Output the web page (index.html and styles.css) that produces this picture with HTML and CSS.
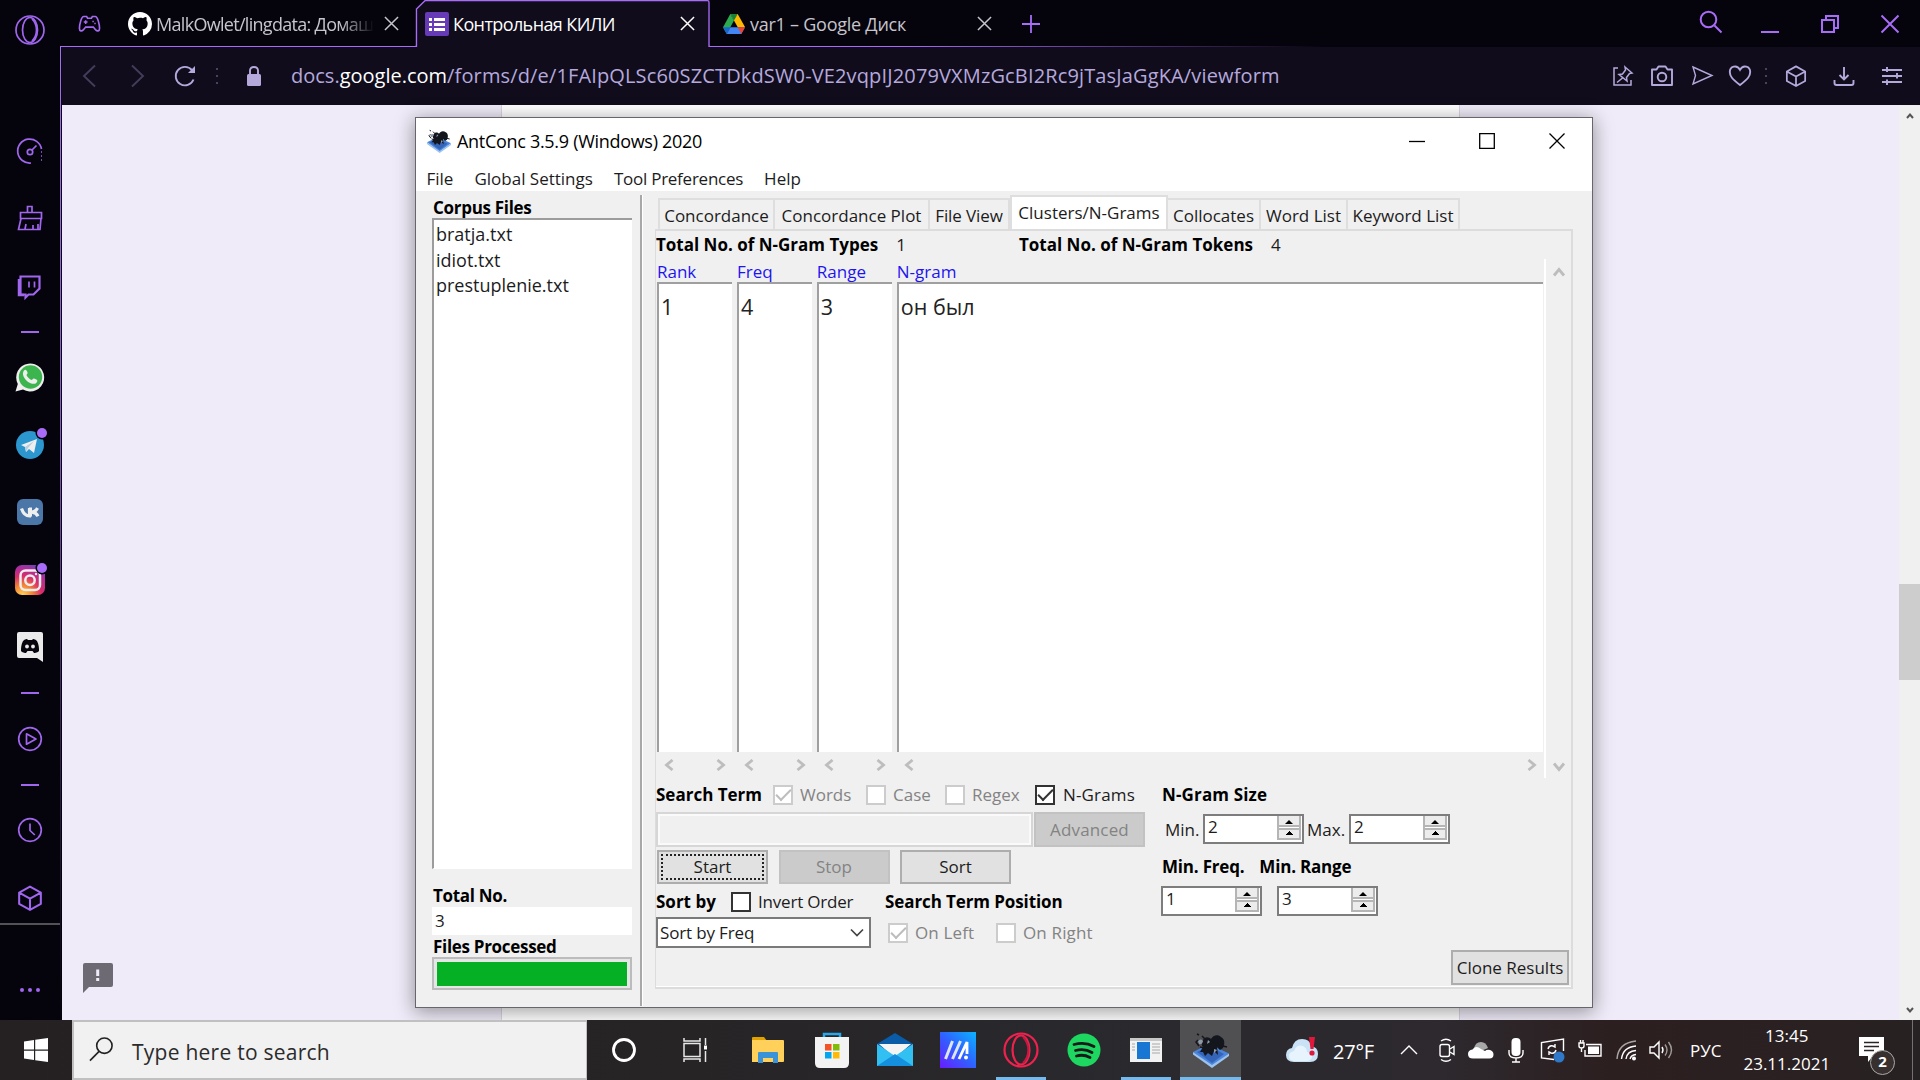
FILE: index.html
```html
<!DOCTYPE html>
<html lang="ru">
<head>
<meta charset="utf-8">
<title>Контрольная КИЛИ</title>
<link rel="stylesheet" href="styles.css">
</head>
<body>
<svg class="defs" width="0" height="0">
  <symbol id="ant" viewBox="0 0 36 36">
    <path d="M0 20 16 12l20 9.500L19 34z" fill="#4a86dd"/><path d="M0 20v2.500L19 36l17-12v-2.500L19 33z" fill="#9cc2ee"/><path d="M4 20 16 14l15 8-12 9z" fill="#3565b8"/>
    <path d="M10 8c2-4 6-3 8-1 2-4 7-5 10-2 4 2 4 7 2 11l-3 2-3-3 1 8-4-4-2 5-4-3-3 3-2-4-3 0 3-5c-2-2-1-5 0-7z" fill="#14161d"/>
    <path d="M5 9q3-3 5 0-1 4-4 3zM15 8l2 2-3 2zM21 17l3 1-3 3z" fill="#8f99a8"/>
    <path d="M5 8 3 10l3 4M4 2l2 1M9 4l3 3M30 14l4 1M7 15l4 1" stroke="#14161d" stroke-width="1.500" fill="none"/>
  </symbol>
  <symbol id="cube" viewBox="0 0 24 24"><path d="M12 1.5 22 7v10.500L12 23 2 17.500V7zM2 7l10 5.500L22 7M12 12.500V23" fill="none" stroke="currentColor" stroke-width="1.9" stroke-linejoin="round"/></symbol>
  <symbol id="left" viewBox="0 0 10 12"><path d="M8.500 1 2.500 6l6 5" fill="none" stroke="#bdbdbd" stroke-width="2.800"/></symbol>
  <symbol id="right" viewBox="0 0 10 12"><path d="m1.500 1 6 5-6 5" fill="none" stroke="#bdbdbd" stroke-width="2.800"/></symbol>
  <symbol id="x" viewBox="0 0 16 16"><path d="m1 1 14 14M15 1 1 15" fill="none" stroke="currentColor" stroke-width="1.600"/></symbol>
</svg>

<div class="browser">
  <nav class="sidebar">
    <svg class="side" viewBox="0 0 30 30"><ellipse cx="15" cy="15" rx="14" ry="14"/><ellipse cx="15" cy="15" rx="7.500" ry="12.500"/><path d="M17 4c6 6 6 16 0 22"/></svg>
    <svg class="side after-logo" viewBox="0 0 30 30"><path d="M16 27A12 12 0 1 1 26.500 13" /><circle cx="15" cy="16" r="2.700"/><path d="m17 14 4.500-4.500M26 16h1M26 20h1M26 24h1"/></svg>
    <svg class="side gap37" viewBox="0 0 30 30"><path d="M12.500 9V3.500h4.500V9M5.500 9.500h21v6h-21zM6 15.500 3.500 26.500H25l1-11M10 26l1-5M18 26v-4M23 26v-5"/></svg>
    <svg class="side gap38" viewBox="0 0 30 30"><path d="M5.500 5.500h19v12l-6 6h-5l-3 3v-3h-5z" stroke-width="2.200"/><path d="M4 8v16h5" stroke-width="2.500"/><path d="M14 10.500v6M19.500 10.500v6"/></svg>
    <div class="dash gap30"></div>
    <svg class="side gap29" viewBox="0 0 30 30"><path d="M.5 29.500 2.800 22A14 14 0 1 1 8 27.500z" fill="#eee" stroke="none"/><circle cx="15.500" cy="15" r="11.700" fill="#3db54e" stroke="none"/><path d="M9 8.500c1.500-1.500 2.500-1 3.500 2 .5 1-1 2-1 2.500 1 2.500 3 4 5 5 1 0 1.500-2 2.500-1.500 4 1.500 3.500 2 3 3.500-1.500 3-6 2-9.500-.5C9 16.500 6.500 12 9 8.500z" fill="#eee" stroke="none"/></svg>
    <div class="app gap38"><svg class="side" viewBox="0 0 30 30"><circle cx="15" cy="15" r="14" fill="#2c96cf" stroke="none"/><path d="m6 15 16-6-3 14-5-4-3 3-1-5z" fill="#eee" stroke="none"/><path d="m10 17 9-6-6 7-2 4z" fill="#b9cddd" stroke="none"/></svg><i class="badge"></i></div>
    <svg class="side gap37" viewBox="0 0 30 30"><rect x="2" y="2" width="26" height="26" rx="6" fill="#4a76a8" stroke="none"/><path d="M6.500 11.500c1.500 4.500 4 7.500 8 7.500v-8M22.500 11c-1 2-3 4-5.500 4.200 2.500.3 5 2 6 4" stroke="#eee" stroke-width="3.200"/><path d="M15.500 10.500v9" stroke="#eee" stroke-width="3"/></svg>
    <div class="app gap38"><svg class="side" viewBox="0 0 30 30"><defs><radialGradient id="ig" cx=".25" cy="1" r="1.150"><stop offset="0" stop-color="#ffd35c"/><stop offset=".28" stop-color="#f58634"/><stop offset=".55" stop-color="#d92d6b"/><stop offset=".8" stop-color="#a92e9c"/><stop offset="1" stop-color="#4756c9"/></radialGradient></defs><rect width="30" height="30" rx="7" fill="url(#ig)" stroke="none"/><rect x="5.500" y="5.500" width="19.500" height="19.500" rx="5" stroke="#eee" stroke-width="2.500"/><circle cx="15" cy="15.200" r="4.700" stroke="#eee" stroke-width="2.500"/><circle cx="21" cy="9" r="1.200" fill="#eee" stroke="none"/></svg><i class="badge"></i></div>
    <svg class="side gap37" viewBox="0 0 30 30"><path d="M4 0h22q2 0 2 2v28l-6-4H4q-2 0-2-2V2q0-2 2-2z" fill="#eaeaea" stroke="none"/><path d="M8 9c2-2 4-2 4-2l1 1h4l1-1s2 0 4 2c2 4 2 7 2 10-2 2-5 2-5 2l-1.500-2h-5L11 21s-3 0-5-2c0-3 0-6 2-10z" fill="#08050e" stroke="none"/><circle cx="12" cy="14.500" r="1.900" fill="#eaeaea" stroke="none"/><circle cx="18" cy="14.500" r="1.900" fill="#eaeaea" stroke="none"/></svg>
    <div class="dash gap30"></div>
    <svg class="side gap30" viewBox="0 0 30 30"><circle cx="15" cy="15" r="11.300"/><path d="M11.500 9.800v10.400l9.500-5.200z" stroke-linejoin="round"/></svg>
    <div class="dash gap30"></div>
    <svg class="side gap29" viewBox="0 0 30 30"><circle cx="15" cy="15" r="11.300"/><path d="M15 8.500v7l4.800 4.500"/></svg>
    <svg class="side-cube gap38"><use href="#cube"/></svg>
    <hr class="side-rule">
    <div class="more"><i></i><i></i><i></i></div>
  </nav>

  <main class="main">
    <header class="tabs">
      <svg class="pad" viewBox="0 0 24 18"><path d="M6 1.200h3l1 1.800h4l1-1.800h3c2.500 0 4.500 8 4.500 12.500 0 3-2.500 3-4 1.500l-2.500-3H8l-2.500 3c-1.500 1.500-4 1.500-4-1.500C1.500 9.200 3.500 1.200 6 1.200z" fill="none" stroke="#a46bf2" stroke-width="1.700"/><path d="M8 5v4M6 7h4M15 6.500h1.500M17 8.500h1.500" stroke="#a46bf2" stroke-width="1.600"/></svg>
      <div class="tab tab-first">
        <svg width="24" height="24" viewBox="0 0 16 16"><path fill="#fff" d="M8 0C3.580 0 0 3.580 0 8c0 3.540 2.290 6.530 5.470 7.590.4.070.55-.17.55-.38 0-.19-.01-.82-.01-1.490-2.010.37-2.530-.49-2.690-.94-.09-.23-.48-.94-.82-1.130-.28-.15-.68-.52-.01-.53.630-.01 1.080.58 1.230.82.720 1.210 1.870.87 2.330.66.070-.52.280-.87.510-1.070-1.780-.2-3.640-.89-3.640-3.950 0-.87.310-1.590.82-2.150-.08-.2-.36-1.020.08-2.120 0 0 .67-.21 2.200.82A7.600 7.600 0 0 1 8 3.870c.68 0 1.360.09 2 .27 1.530-1.040 2.200-.82 2.200-.82.440 1.100.16 1.920.08 2.120.51.560.82 1.270.82 2.150 0 3.070-1.870 3.750-3.650 3.950.290.250.540.730.540 1.480 0 1.070-.01 1.930-.01 2.200 0 .21.150.46.550.38A8.010 8.010 0 0 0 16 8c0-4.420-3.580-8-8-8z"/></svg>
        <span class="tab-title fade">MalkOwlet/lingdata: Домаш</span>
        <svg class="close"><use href="#x"/></svg>
      </div>
      <div class="tab tab-active">
        <svg class="outline" viewBox="0 0 296 47"><path d="M0 46.500H1.500V9L10 .7H292.500Q294 .7 294 2.500V46.500H296" fill="#100c1c" stroke="#a86cf8" stroke-width="1.300"/></svg>
        <svg width="24" height="24" viewBox="0 0 24 24"><rect width="24" height="24" rx="2" fill="#673ab7"/><path d="M4 6h3v3H4zM9 6h11v3H9zM4 11h3v3H4zM9 11h11v3H9zM4 16h3v3H4zM9 16h11v3H9z" fill="#fff"/></svg>
        <span class="tab-title">Контрольная КИЛИ</span>
        <svg class="close"><use href="#x"/></svg>
      </div>
      <div class="tab tab-last">
        <svg width="22" height="20" viewBox="0 0 22 20"><path d="M7.300 0h7.400L22 13h-7.400z" fill="#ffba00"/><path d="M7.300 0 11 6.500 3.700 20 0 13.300z" fill="#2da94f"/><path d="M7.300 0h7.400L11 6.500z" fill="#188038"/><path d="M3.700 20 7.400 13.300H22L18.300 20z" fill="#4285f4"/><path d="M14.700 13.300H22L18.300 20z" fill="#ea4335"/><path d="M0 13.300h7.400L3.700 20z" fill="#1967d2"/></svg>
        <span class="tab-title">var1 – Google Диск</span>
        <svg class="close"><use href="#x"/></svg>
      </div>
      <svg class="plus" viewBox="0 0 18 18"><path d="M9 0v18M0 9h18" stroke="#a86cf8" stroke-width="1.800"/></svg>
      <div class="winctl">
        <svg class="find" width="24" height="24" viewBox="0 0 24 24"><circle cx="9.500" cy="9.500" r="7.800"/><path d="m15.500 15.500 7 7"/></svg>
        <svg width="18" height="18" viewBox="0 0 18 18"><path d="M0 17h18"/></svg>
        <svg width="18" height="18" viewBox="0 0 18 18"><path d="M1 5h12v12H1zM5 5V1h12v12h-4"/></svg>
        <svg width="18" height="18" viewBox="0 0 18 18"><path d="m.5.5 17 17M17.500.5l-17 17"/></svg>
      </div>
    </header>
    <div class="toolbar">
      <svg class="nav-off" width="13" height="22" viewBox="0 0 13 22"><path d="M12 .5 1 11l11 10.500"/></svg>
      <svg class="nav-off fwd" width="13" height="22" viewBox="0 0 13 22"><path d="m1 .5 11 10.500L1 21.500"/></svg>
      <svg class="reload" width="22" height="22" viewBox="0 0 22 22"><path d="M19.500 14.500A9.200 9.200 0 1 1 18 5.200"/><path d="M21 1v7h-7z" fill="#b5a9dc" stroke="none"/></svg>
      <div class="dots nav-dots"><i></i><i></i><i></i></div>
      <svg class="lock" width="14" height="20" viewBox="0 0 14 20"><rect y="8" width="14" height="12" rx="1.500" fill="#b5a9dc" stroke="none"/><path d="M3 9V4.500Q3 1 7 1t4 3.500V9"/></svg>
      <div class="url">docs.<b>google.com</b><span>/forms/d/e/1FAIpQLSc60SZCTDkdSW0-VE2vqpIJ2079VXMzGcBI2Rc9jTasJaGgKA/viewform</span></div>
      <div class="actions">
        <svg viewBox="0 0 22 22"><path d="M6 3H2v17h17v-5M13 2l7 6-2.500.5-3 4 .5 3.500L7 9.500l3.500-.5 3-4zM10.500 13 5 17.500" stroke-width="1.500"/></svg>
        <svg viewBox="0 0 22 22"><path d="M1 4.500h4.500L7.500 1.500h7l2 3H21v15.500H1z" stroke-linejoin="round"/><circle cx="11" cy="12" r="4.300"/></svg>
        <svg viewBox="0 0 22 22"><path d="m2 2 19 8.500L2 19l2.500-8.500z" stroke-width="1.400"/></svg>
        <svg viewBox="0 0 22 22"><path d="M11 20C3 14 .8 11 .8 7c0-5.500 7-8 10.200-2.200C14.200-1 21.200 1.500 21.200 7c0 4-2.200 7-10.200 13z"/></svg>
        <div class="dots"><i></i><i></i><i></i></div>
        <svg><use href="#cube"/></svg>
        <svg viewBox="0 0 22 22"><path d="M11 2v12M6.500 10l4.500 4.500 4.500-4.500M1.500 15v3q0 2 2 2h15q2 0 2-2v-3"/></svg>
        <svg viewBox="0 0 22 22"><path d="M1 5h20M1 11h20M1 17h20M6 2v5M16 8v5.500M6 14.500V20"/></svg>
      </div>
    </div>
    <div class="page">
      <svg class="feedback" viewBox="0 0 30 30"><path d="M2 0h26q2 0 2 2v20q0 2-2 2H6l-6 6V2q0-2 2-2z" fill="#6e6a73"/><path d="M13.200 6.500h3v6.500h-3zM13.200 15h3v3h-3z" fill="#efebf8"/></svg>
      <div class="card"></div>
      <div class="scrollbar">
        <svg viewBox="0 0 8 6"><path d="m1 5 3-3.500L7 5" fill="none" stroke="#555" stroke-width="2"/></svg>
        <div class="thumb"></div>
        <svg viewBox="0 0 8 6"><path d="m1 1 3 3.500L7 1" fill="none" stroke="#555" stroke-width="2"/></svg>
      </div>
    </div>
  </main>
</div>

<section class="window">
  <div class="titlebar">
    <svg class="title-icon"><use href="#ant"/></svg>
    <span class="title">AntConc 3.5.9 (Windows) 2020</span>
    <div class="title-buttons">
      <svg viewBox="0 0 16 16"><path d="M0 8.500h16"/></svg>
      <svg viewBox="0 0 16 16"><path d="M.7.7h14.600v14.600H.7z"/></svg>
      <svg viewBox="0 0 16 16"><path d="m.5.500 15 15M15.500.500l-15 15"/></svg>
    </div>
  </div>
  <div class="menubar"><span>File</span><span>Global Settings</span><span>Tool Preferences</span><span>Help</span></div>
  <div class="panes">
    <aside class="files">
      <h2>Corpus Files</h2>
      <ul class="filelist"><li>bratja.txt</li><li>idiot.txt</li><li>prestuplenie.txt</li></ul>
      <h2 class="total">Total No.</h2>
      <div class="total-field">3</div>
      <h2 class="processed">Files Processed</h2>
      <div class="progress"><div></div></div>
    </aside>
    <div class="tool">
      <div class="tooltabs"><span class="w117">Concordance</span><span class="w154">Concordance Plot</span><span class="w80">File View</span><span class="active">Clusters/N-Grams</span><span class="w92">Collocates</span><span class="w87">Word List</span><span class="w112">Keyword List</span></div>
      <div class="panel">
        <div class="stats"><b>Total No. of N-Gram Types</b><span>1</span><b class="tokens">Total No. of N-Gram Tokens</b><span>4</span></div>
        <div class="results">
          <div class="col"><h3>Rank</h3><div class="cells">1</div><div class="hscroll"><svg><use href="#left"/></svg><svg><use href="#right"/></svg></div></div>
          <div class="col"><h3>Freq</h3><div class="cells">4</div><div class="hscroll"><svg><use href="#left"/></svg><svg><use href="#right"/></svg></div></div>
          <div class="col"><h3>Range</h3><div class="cells">3</div><div class="hscroll"><svg><use href="#left"/></svg><svg><use href="#right"/></svg></div></div>
          <div class="col wide"><h3>N-gram</h3><div class="cells">он был</div><div class="hscroll"><svg><use href="#left"/></svg><svg><use href="#right"/></svg></div></div>
          <div class="vscroll">
            <svg viewBox="0 0 12 10"><path d="m1 8.500 5-6 5 6" fill="none" stroke="#bdbdbd" stroke-width="2.800"/></svg>
            <svg viewBox="0 0 12 10"><path d="m1 1.500 5 6 5-6" fill="none" stroke="#bdbdbd" stroke-width="2.800"/></svg>
          </div>
        </div>
        <div class="controls">
          <div class="search">
            <div class="row terms">
              <b>Search Term</b>
              <i class="box off ticked"></i><span class="dim words">Words</span>
              <i class="box off"></i><span class="dim case">Case</span>
              <i class="box off"></i><span class="dim regex">Regex</span>
              <i class="box ticked"></i><span class="ngrams">N-Grams</span>
            </div>
            <div class="row entry-row"><div class="entry"></div><div class="btn disabled">Advanced</div></div>
            <div class="row buttons"><div class="btn focus">Start</div><div class="btn disabled">Stop</div><div class="btn">Sort</div></div>
            <div class="row sortrow"><b>Sort by</b><i class="box"></i><span>Invert Order</span><b class="position">Search Term Position</b></div>
            <div class="row">
              <div class="combo"><span>Sort by Freq</span><svg viewBox="0 0 14 9"><path d="m1 1.500 6 6 6-6" fill="none" stroke="#444" stroke-width="1.700"/></svg></div>
              <i class="box off ticked"></i><span class="dim onleft">On Left</span>
              <i class="box off"></i><span class="dim onright">On Right</span>
            </div>
          </div>
          <div class="sizes">
            <div class="row size-title"><b>N-Gram Size</b></div>
            <div class="row size-row"><span class="lbl-min">Min.</span><div class="spin"><span>2</span><i></i></div><span class="lbl-max">Max.</span><div class="spin"><span>2</span><i></i></div></div>
            <div class="row freq-title"><b>Min. Freq.</b><b>Min. Range</b></div>
            <div class="row freq-row"><div class="spin"><span>1</span><i></i></div><div class="spin"><span>3</span><i></i></div></div>
          </div>
          <div class="btn clone">Clone Results</div>
        </div>
      </div>
    </div>
  </div>
</section>

<footer class="taskbar">
  <svg class="start" viewBox="0 0 24 24"><path d="M0 3.400 10 2v9.500H0zM11.200 1.800 24 0v11.500H11.200zM0 12.700h10V22L0 20.600zM11.200 12.700H24V24l-12.800-1.800z" fill="#fff"/></svg>
  <div class="searchbox">
    <svg viewBox="0 0 26 26"><circle cx="16" cy="9" r="8"/><path d="M10.500 15 1 24.500"/></svg>
    <span>Type here to search</span>
  </div>
  <div class="launch">
    <svg width="26" height="26" viewBox="0 0 26 26"><circle cx="13" cy="13" r="10.500" fill="none" stroke="#fff" stroke-width="2.800"/></svg>
    <svg width="26" height="26" viewBox="0 0 26 26"><g fill="none" stroke="#e8e8e8" stroke-width="1.500"><path d="M1 6.500h16v13H1zM1 1v3h16V1M1 25v-3h16v3M22.500 1v7M22.500 14v11"/></g><path d="M21 8.500h3v4h-3z" fill="#fff"/></svg>
    <svg width="34" height="28" viewBox="0 0 34 28"><path d="M1 2q0-1 1-1h11l3 4H1z" fill="#e0a000"/><path d="M1 4h31q1 0 1 1v20q0 1-1 1H1z" fill="#ffd05a"/><path d="M7 27V17q0-1 1-1h18q1 0 1 1v10h-5v-5H12v5z" fill="#3a92d8"/></svg>
    <svg width="36" height="36" viewBox="0 0 36 36"><path d="M10 8V2h16v6" fill="none" stroke="#2aa7ea" stroke-width="2.500"/><path d="M1 5h34v26q0 5-5 5H6q-5 0-5-5z" fill="#f3f3f3"/><path fill="#f35325" d="M11 12h6.500v6.500H11z"/><path fill="#81bc06" d="M19 12h6.500v6.500H19z"/><path fill="#05a6f0" d="M11 20h6.500v6.500H11z"/><path fill="#ffba08" d="M19 20h6.500v6.500H19z"/></svg>
    <svg width="36" height="36" viewBox="0 0 36 36"><path d="M0 12 18 1l18 11v8H0z" fill="#0a5ca8"/><path d="M2 12h32L18 26z" fill="#f4f4f4"/><path d="M0 12v22h36V12L18 24z" fill="#32c0f2"/><path d="m0 34 18-12 18 12z" fill="#1490df"/></svg>
    <svg width="36" height="36" viewBox="0 0 36 36"><defs><linearGradient id="ma" x1="0" y1="1" x2="1" y2="0"><stop offset="0" stop-color="#6a1bff"/><stop offset=".5" stop-color="#2f62ff"/><stop offset="1" stop-color="#0ab4ff"/></linearGradient></defs><path d="M0 0h36v36H0z" fill="url(#ma)"/><path d="m5.500 27 7-18M12.500 27l8-18" stroke="#dbe6ff" stroke-width="3"/><path d="m19 27 8-17v12" fill="none" stroke="#fff" stroke-width="2.800"/><circle cx="26" cy="25.500" r="2" fill="#fff"/></svg>
    <div class="running"><svg width="36" height="36" viewBox="0 0 36 36"><g fill="none" stroke="#f0214e" stroke-width="2.200"><circle cx="18" cy="18" r="16.500"/><ellipse cx="18" cy="18" rx="8.500" ry="14.500"/></g><path d="M20 5c7 7 7 19 0 26" fill="none" stroke="#c01a40" stroke-width="2"/></svg></div>
    <svg width="34" height="34" viewBox="0 0 34 34"><circle cx="17" cy="17" r="16.500" fill="#1ed760"/><path d="M7 11.500q11-3 20 2M8.500 17.500q9-2.500 16.500 2M9.500 23q7-2 13.500 1.500" fill="none" stroke="#17181a" stroke-width="2.800" stroke-linecap="round"/></svg>
    <div class="running"><svg width="32" height="24" viewBox="0 0 32 24"><path d="M0 0h32v24H0z" fill="#f2f2f2"/><path d="M0 0h32v3H0z" fill="#c8c8c8"/><path d="M7 4h13v17H7z" fill="#1877d2"/><path d="M2 6h3M2 9h3M2 12h3M22 6h8M22 9h8M22 12h8M22 15h8" stroke="#a8a8a8" stroke-width="1.200"/></svg></div>
    <div class="running current"><svg width="36" height="36"><use href="#ant"/></svg></div>
  </div>
  <div class="weather">
    <svg viewBox="0 0 34 26"><path d="M8 25q-8 0-8-7 0-6 6-7Q8 2 16 2q8 0 9 7 7 1 7 8 0 8-8 8z" fill="#c9e2f6"/><path d="M9 24q-6 0-6-5 0-4 5-5 3-7 9-5 4 2 4 6 6 1 5 5-1 4-6 4z" fill="#e8f4fd"/><path d="M23 0h6l-1.500 12h-3z" fill="#e0183c"/><circle cx="26" cy="16" r="2.600" fill="#e0183c"/></svg>
    <span>27°F</span>
  </div>
  <div class="tray">
    <svg width="18" height="10" viewBox="0 0 18 10"><path d="m1 9 8-8 8 8"/></svg>
    <svg width="18" height="24" viewBox="0 0 18 24"><rect x="2" y="6.500" width="9.500" height="12" rx="2"/><path d="m12 11 4-2.500v8L12 14M3 3q5-3.500 10 0M3 21.500q5 3.500 10 0"/></svg>
    <svg width="26" height="18" viewBox="0 0 26 18"><path d="M6 8q1-7 7-7 5 0 7 6l-9 4z" fill="#a8a8a8" stroke="none"/><path d="M5 17.500q-5 0-5-4.500 0-4 4.500-4.500Q8 4 13 8l4 2q2-2 5-1 3.500 1 3.500 4.500 0 4-4 4z" fill="#fff" stroke="none"/></svg>
    <svg width="16" height="26" viewBox="0 0 16 26"><rect x="3.500" y="1" width="9" height="18" rx="4" fill="#fff" stroke="none"/><path d="M1 13v3q0 5 7 5t7-5v-3M8 21v4M4 25h8"/></svg>
    <svg width="26" height="26" viewBox="0 0 26 26"><path d="M14 22.500 1.500 21V5.500L23.500 2v12"/><path d="M8 12q1-4 5-3l2 1V7M16 13q-1 4-5 3l-2-1v3"/><circle cx="19" cy="20" r="5.500" fill="#2f79c8" stroke="none"/></svg>
    <svg width="25" height="20" viewBox="0 0 25 20"><path d="M8 4.500h15V16H7V10"/><path d="M10 6.500h11V14H10z" fill="#fff" stroke="none"/><path d="M1 3v3q0 2 2.500 2T6 6V3zM2.500 3V0M5 3V0M3.500 8v4"/></svg>
    <svg width="22" height="22" viewBox="0 0 22 22"><path d="M1 20Q2 4 20 2" opacity=".6"/><path d="M5.500 20Q7 8 20 7M10 20q1-8 10-8.500M14 20q1-4 6-4.500"/><circle cx="18" cy="19.500" r="1.300" fill="#fff"/></svg>
    <svg width="25" height="20" viewBox="0 0 25 20"><path d="M1 7v6h4l5 5V2L5 7z"/><path d="M13 7q2 3 0 6"/><path d="M16 4.500q4 5.500 0 11M19.500 2q6 8 0 16" opacity=".55"/></svg>
  </div>
  <span class="lang">РУС</span>
  <div class="clock"><span>13:45</span><span>23.11.2021</span></div>
  <div class="notify"><svg width="26" height="26" viewBox="0 0 26 26"><path d="M0 0h25v19H14l-5 6v-6H0z" fill="#fff"/><path d="M5 5.500h15M5 9.500h15M5 13.500h10" stroke="#2a2425" stroke-width="1.500"/></svg><b>2</b></div>
</footer>
</body>
</html>
```
FILE: styles.css
```css
* { box-sizing: border-box; }
body { margin: 0; width: 1920px; height: 1080px; overflow: hidden; position: relative; font: 17px/24px "Open Sans", "Noto Sans", sans-serif; color: #1c1c1c; background: #05030c; }
svg { display: block; flex: none; overflow: visible; }
i { font-style: normal; }
h2, h3 { margin: 0; font-size: 17px; }
.defs { position: absolute; }

.browser { display: flex; height: 1020px; }

/* sidebar */
.sidebar { width: 60px; display: flex; flex-direction: column; align-items: center; padding-top: 15px; color: #a066ee; }
.side { width: 30px; height: 30px; fill: none; stroke: #a066ee; stroke-width: 1.7; }
.after-logo { margin-top: 91px; }
.gap29 { margin-top: 29px; }
.gap30 { margin-top: 30px; }
.gap37 { margin-top: 37px; }
.gap38 { margin-top: 38px; }
.dash { width: 18px; height: 2px; background: #a066ee; flex: none; }
.app { position: relative; }
.badge { position: absolute; left: 22px; top: -2px; width: 10px; height: 10px; border-radius: 50%; background: #a86cf8; box-shadow: 0 0 0 1.5px #05030c; }
.side-cube { width: 26px; height: 26px; margin-top: 40px; }
.side-rule { width: 60px; height: 2px; border: 0; background: #555257; margin: 12px 0 0; flex: none; }
.more { display: flex; gap: 4px; margin-top: 63px; }
.more i { width: 4px; height: 4px; border-radius: 50%; background: #a066ee; }

.main { flex: 1; display: flex; flex-direction: column; position: relative; padding-left: 2px; background: #05030c; }
.main::before { content: ""; position: absolute; left: 0; top: 46px; width: 1px; bottom: 0; background: linear-gradient(#a86cf8, #8a58cc 40%, #3a2558 70%, #05030c); }

/* tab strip */
.tabs { height: 47px; display: flex; align-items: center; background: #05030c linear-gradient(90deg, #a86cf8 45%, transparent 68%) bottom / 100% 1px no-repeat; margin-left: -1px; }
.pad { width: 23px; height: 18px; margin-left: 17px; }
.tab { display: flex; align-items: center; height: 47px; color: #c6c4cc; position: relative; }
.tab-first { width: 314px; padding-left: 27px; }
.tab-first .close { margin-left: 3px; }
.tab-title { font-size: 18px; white-space: nowrap; margin-left: 4px; letter-spacing: -.6px; }
.fade { width: 225px; letter-spacing: -.7px; -webkit-mask-image: linear-gradient(90deg, #000 82%, transparent 97%); mask-image: linear-gradient(90deg, #000 82%, transparent 97%); }
.close { width: 15px; height: 15px; }
.tab-active { width: 295px; padding-left: 10px; color: #fff; background: #100c1c; clip-path: polygon(0 8px, 9px 0, 100% 0, 100% 100%, 0 100%); }
.tab-active .close, .tab-last .close { margin-left: auto; }
.tab-active .close { margin-right: 15px; }
.tab-active > * { position: relative; }
.tab-active .outline { position: absolute; left: 0; top: 0; width: 296px; height: 47px; }
.tab-last { width: 282px; padding-left: 13px; }
.tab-last .tab-title { margin-left: 5px; letter-spacing: -.25px; }
.plus { width: 18px; height: 18px; margin-left: 30px; }
.winctl { margin-left: auto; display: flex; align-items: center; padding-right: 21px; fill: none; stroke: #a86cf8; stroke-width: 2; }
.winctl svg + svg { margin-left: 42px; }
.winctl svg:nth-child(2) { margin-left: 38px; }
.winctl .find { margin-bottom: 3px; }

/* address bar */
.toolbar { height: 58px; display: flex; align-items: center; background: #100c1c; padding-left: 21px; fill: none; stroke: #b5a9dc; stroke-width: 1.9; }
.nav-off { stroke: #433d59; }
.fwd { margin-left: 35px; }
.reload { margin-left: 30px; }
.dots { width: 2px; display: flex; flex-direction: column; gap: 5px; }
.dots i { width: 2px; height: 2px; background: #494360; }
.nav-dots { margin-left: 20px; }
.lock { margin-left: 29px; }
.url { margin-left: 30px; font-size: 20px; color: #b5a9dc; white-space: nowrap; }
.url b { font-weight: 400; color: #fff; }
.url span { letter-spacing: .14px; }
.actions { margin-left: auto; display: grid; grid-template-columns: 48px 30px 50px 26px 26px 34px 62px 34px; align-items: center; padding-right: 11px; color: #b5a9dc; justify-items: center; margin-bottom: 1px; }
.actions svg { width: 22px; height: 22px; }

/* page */
.page { flex: 1; display: flex; background: #efebf8; }
.feedback { width: 30px; height: 30px; margin: 858px 0 0 21px; }
.card { width: 959px; margin-left: 388px; background: #fff; border: solid #d9d5e2; border-width: 0 1px; }
.scrollbar { width: 21px; margin-left: auto; background: #f0f0f0; display: flex; flex-direction: column; align-items: center; padding: 8px 0 7px; }
.scrollbar svg { width: 8px; height: 6px; }
.thumb { width: 21px; height: 96px; background: #cdcdcd; margin: 465px 0 auto; }

/* AntConc window */
.window { position: absolute; left: 415px; top: 117px; width: 1178px; height: 891px; border: 1px solid #68666c; background: #f0f0f0; box-shadow: 0 3px 18px 1px rgba(0, 0, 0, .38); display: flex; flex-direction: column; }
.titlebar { height: 48px; background: #fff; display: flex; align-items: center; padding: 0 0 2px 11px; color: #000; }
.title-icon { width: 24px; height: 24px; }
.title { font-size: 18px; letter-spacing: -.3px; margin-left: 6px; }
.title-buttons { margin-left: auto; display: flex; gap: 54px; padding-right: 27px; fill: none; stroke: #000; stroke-width: 1.3; }
.title-buttons svg { width: 16px; height: 16px; }
.menubar { height: 25px; background: #fff; display: flex; padding-left: 10.500px; gap: 21px; line-height: 26px; }
.menubar span:nth-child(3) { letter-spacing: -.25px; }
.menubar span { white-space: nowrap; }
.panes { flex: 1; display: flex; padding-top: 4px; }
.files { width: 226px; height: 811px; padding: 0 8px 0 16px; border-right: 2px solid #a8a8a8; box-shadow: 1px 0 #fff; }
.files h2 { letter-spacing: -.3px; height: 23px; color: #000; line-height: 26px; padding-left: 1px; }
.filelist { margin: 0; padding: 2px 0 0 2px; list-style: none; height: 651px; width: 200px; background: #fff; border: solid #9c9c9c; border-width: 2px 0 0 2px; font-size: 18px; line-height: 25.6px; border-bottom: 1px solid #fff; }
.files .total { margin-top: 14px; height: 24px; }
.total-field { width: 200px; height: 28px; background: #fff; padding-left: 3px; line-height: 27px; }
.files .processed { height: 22px; line-height: 24px; }
.progress { width: 200px; height: 33px; border: 2px solid #bcbcbc; background: #e6e6e6; padding: 3px; }
.progress div { height: 24px; background: #06b025; }

.tool { padding-left: 13px; }
.tooltabs { height: 34px; display: flex; align-items: flex-end; padding-left: 3px; }
.tooltabs span { height: 31px; border: 2px solid #dedede; border-width: 2px 2px 0 0; text-align: center; line-height: 32px; white-space: nowrap; }
.tooltabs span:first-child { border-left-width: 2px; }
.tooltabs .active { width: 158px; height: 34px; background: #fff; line-height: 32px; border-left-width: 2px; }
.w117 { width: 117px; }
.w154 { width: 155px; }
.w80 { width: 80px; letter-spacing: -.1px; }
.w92 { width: 93px; }
.w87 { width: 87px; }
.w112 { width: 112px; }
.panel { width: 918px; height: 760px; border: 2px solid #dcdcdc; border-left-width: 1px; box-shadow: inset 0 -1px #fff; }
.stats { height: 28px; display: flex; line-height: 28px; }
.stats span { margin-left: 18px; }
.stats .tokens { margin-left: 113px; }
b, h2, h3 { font-weight: 700; white-space: nowrap; }
.stats b, .row b { color: #000; }
.results { height: 519px; display: flex; }
.col { width: 75px; margin: 0 4px 0 1px; display: flex; flex-direction: column; }
.wide { width: 647px; margin-right: 1px; margin-left: 1px; }
.col h3 { font-weight: 400; color: #1d14f2; height: 23px; line-height: 26px; }
.cells { height: 470px; background: #fff; border: solid #9f9f9f; border-width: 2px 0 0 2px; padding: 8px 0 0 2px; font-size: 21.500px; line-height: 30px; color: #222; }
.hscroll { height: 25px; display: flex; justify-content: space-between; align-items: center; padding: 0 6px 0 7px; }
.hscroll svg { width: 10px; height: 12px; }
.vscroll { width: 27px; border-left: 2px solid #fff; display: flex; flex-direction: column; justify-content: space-between; align-items: center; padding: 8px 0 6px; }
.vscroll svg { width: 12px; height: 10px; }

.controls { display: flex; height: 209px; }
.row { display: flex; align-items: center; white-space: nowrap; }
.search { width: 505px; }
.terms { height: 34px; }
.terms b { width: 117px; }
.box { width: 20px; height: 20px; border: 2px solid #333; background: #fff; flex: none; display: grid; place-items: center; }
.box.off { border-color: #ccc; }
.box.ticked::before { content: ""; width: 13px; height: 6px; border: solid #333; border-width: 0 0 2px 2px; transform: translateY(-2px) rotate(-45deg); }
.box.off.ticked::before { border-color: #bdbdbd; }
.box + span { margin-left: 7px; }
.dim { color: #838383; }
.words { width: 66px; }
.case { width: 52px; }
.regex { width: 63px; }
.row .ngrams { margin-left: 8px; letter-spacing: .15px; }
.entry { width: 377px; height: 35px; border: 2px solid #d6d6d6; box-shadow: inset 0 0 0 2px #fafafa; }
.btn { width: 111px; height: 34px; background: #e1e1e1; border: 2px solid #adadad; display: grid; place-items: center; line-height: 24px; white-space: nowrap; }
.btn.disabled { background: #cbcbcb; border-color: #c2c2c2; color: #838383; }
.entry-row { height: 35px; gap: 1px; }
.entry-row .btn { height: 35px; letter-spacing: .15px; }
.buttons { margin: 3px 0 0 1px; gap: 10.500px; }
.focus { outline: 2px dotted #222; outline-offset: -6px; }
.sortrow { height: 33px; padding-top: 2px; }
.sortrow b:first-child { width: 75px; }
.sortrow span { width: 127px; letter-spacing: -.2px; }
.sortrow .position { letter-spacing: -.1px; }
.combo { width: 215px; height: 31px; border: 2px solid #7a7a7a; background: #fff; display: flex; align-items: center; justify-content: space-between; padding: 0 5px 0 2px; margin-right: 17px; letter-spacing: -.15px; }
.combo svg { width: 14px; height: 9px; }
.onleft { width: 81px; letter-spacing: .15px; }
.onright { letter-spacing: .15px; }
.size-title { height: 36px; padding-bottom: 2px; letter-spacing: .15px; }
.size-row { height: 30px; padding-left: 4px; }
.lbl-min { width: 38px; padding-top: 1px; }
.lbl-max { width: 42px; margin-left: 3px; padding-top: 1px; }
.freq-title { height: 42px; padding-top: 4px; gap: 15px; letter-spacing: -.2px; }
.size-title, .freq-title { padding-left: 1px; }
.freq-row { gap: 15px; }
.spin { width: 101px; height: 30px; border: 2px solid #7d7d7d; background: #fff; display: flex; justify-content: space-between; padding-left: 3px; }
.spin span { line-height: 21px; }
.spin i { width: 24px; height: 24px; margin-right: 1px; border: solid #b5b5b5; border-width: 0 2px 2px; display: block;
  background:
    conic-gradient(from -45deg at 50% 100%, #000 90deg, transparent 0) 50% 4px / 8px 4px no-repeat,
    conic-gradient(from 135deg at 50% 0, #000 90deg, transparent 0) 50% 16px / 8px 4px no-repeat,
    linear-gradient(#b5b5b5 2px, #fff 2px 3px, #b5b5b5 3px) 0 9px / 100% 5px no-repeat,
    #ececec; }
.spin i::before { content: none; }
.spin i { background:
    conic-gradient(from 135deg at 50% 0, #000 90deg, transparent 0) 50% 100% / 8px 4px no-repeat content-box,
    conic-gradient(from 315deg at 50% 100%, transparent 0) 0 0 / 0 0 no-repeat,
    linear-gradient(#b5b5b5 2px, #fff 2px 3px, #b5b5b5 3px) 0 9px / 100% 5px no-repeat,
    #ececec; padding-bottom: 3px; }
.spin i::before { content: ""; display: block; margin: 4px auto 0; width: 0; border: solid transparent; border-width: 0 4px 4px; border-bottom-color: #000; }
.clone { width: 118px; height: 35px; align-self: flex-end; margin: 0 2px 2px auto; }

/* taskbar */
.taskbar { position: relative; height: 60px; display: flex; align-items: center; color: #fff; background: linear-gradient(90deg, #252122, #262425 35%, #2a292e 60%, #2d292e 75%, #2c1f20 84%, #2a2122 95%, #262122); }
.start { width: 24px; height: 24px; margin: 0 25px 0 24px; }
.searchbox { width: 515px; margin-left: -1px; height: 60px; border: 2px solid #c0c0c0; border-right-width: 1px; background: #f1f1f1; color: #2b2b2b; display: flex; align-items: center; padding-left: 15px; font-size: 21px; letter-spacing: .25px; }
.searchbox svg { width: 25px; height: 25px; fill: none; stroke: #222; stroke-width: 1.700; margin: 0 18px 2px 0; }
.searchbox span { padding-top: 3px; }
.launch { height: 60px; display: grid; grid-template-columns: 72px 71px 74px 54px 72px 54px 72px 54px 69px 61px; justify-items: center; align-items: center; margin-left: 1px; }
.running { width: 50px; height: 60px; display: grid; place-items: center; border-bottom: 3px solid #76b9ed; padding-top: 3px; }
.current { width: 61px; background-color: #505053; }
.weather { display: flex; align-items: center; margin-left: 45px; font-size: 20px; letter-spacing: -.2px; width: 115px; gap: 13px; }
.weather svg { width: 34px; height: 26px; }
.weather span { padding-top: 4px; }
.tray { display: grid; grid-template-columns: 36px 39px 30px 40px 33px 42px 31px 38px; align-items: center; justify-items: center; margin-left: -10px; fill: none; stroke: #fff; stroke-width: 1.400; }
.lang { margin-left: 10px; padding-top: 2px; }
.clock { display: flex; flex-direction: column; align-items: center; line-height: 28px; margin-left: 22px; }
.notify { position: relative; margin-left: 29px; }
.notify b { position: absolute; left: 11px; top: 13px; width: 25px; height: 25px; border-radius: 50%; background: #37302f; border: 1.500px solid #aaa; font-size: 15px; line-height: 21px; text-align: center; }
.taskbar::after { content: ""; position: absolute; left: 1912px; top: 0; width: 1px; height: 60px; background: #77706f; }
```
